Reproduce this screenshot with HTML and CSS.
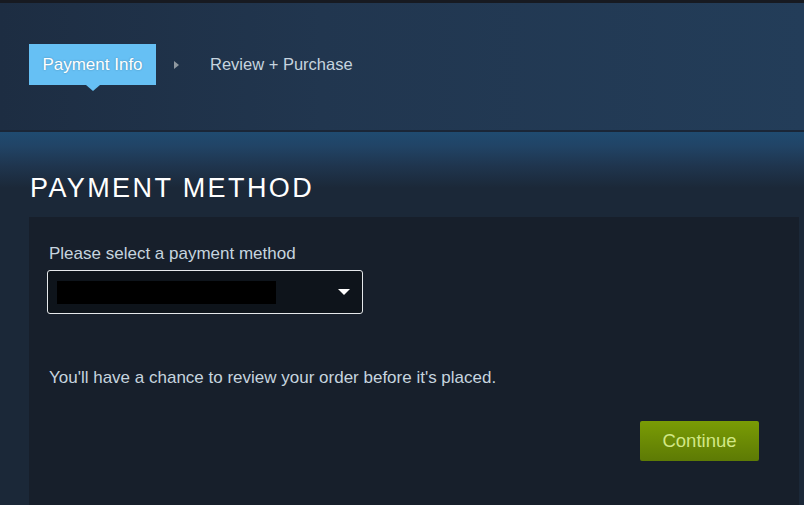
FILE: index.html
```html
<!DOCTYPE html>
<html>
<head>
<meta charset="utf-8">
<link rel="stylesheet" href="styles.css">
</head>
<body>
<div class="topbar"></div>
<header class="header">
  <nav class="steps">
    <div class="step active">Payment Info</div>
    <div class="sep"></div>
    <div class="step">Review + Purchase</div>
  </nav>
</header>
<main class="main">
  <h1 class="title">PAYMENT METHOD</h1>
  <section class="panel">
    <label class="label">Please select a payment method</label>
    <div class="select">
      <div class="redact"></div>
      <div class="caret"></div>
    </div>
    <p class="note">You'll have a chance to review your order before it's placed.</p>
    <div class="actions">
      <button class="btn">Continue</button>
    </div>
  </section>
</main>
</body>
</html>
```

FILE: styles.css
```css
html, body {
  margin: 0;
  padding: 0;
}
body {
  width: 804px;
  height: 505px;
  overflow: hidden;
  background: #1b2838;
  font-family: "Liberation Sans", Arial, sans-serif;
}
.topbar {
  height: 3px;
  background: #171a21;
}
.header {
  height: 129px;
  box-sizing: border-box;
  background: linear-gradient(90deg, #1d2d42 0%, #21364f 40%, #233d59 100%);
  border-bottom: 2px solid #1a2637;
  padding: 41px 0 0 29px;
}
.steps {
  display: flex;
  align-items: center;
}
.step {
  font-size: 16.5px;
  color: #c6d4df;
  height: 41px;
  display: flex;
  align-items: center;
  white-space: nowrap;
}
.step.active {
  position: relative;
  background: #66c0f4;
  color: #ffffff;
  width: 127px;
  box-sizing: border-box;
  justify-content: center;
  font-size: 17px;
  text-shadow: 0 0 2px rgba(0,0,0,0.3);
}
.step.active::after {
  content: "";
  position: absolute;
  left: 57px;
  bottom: -6px;
  border-left: 7px solid transparent;
  border-right: 7px solid transparent;
  border-top: 6px solid #66c0f4;
}
.sep {
  width: 0;
  height: 0;
  margin: 0 31px 0 18px;
  border-top: 4px solid transparent;
  border-bottom: 4px solid transparent;
  border-left: 5px solid #8f98a0;
}
.main {
  background: linear-gradient(180deg, #1f4b70 0px, #214466 14px, #1f354e 34px, #1b2838 56px, #1b2838 100%);
  height: 373px;
  overflow: hidden;
}
.title {
  margin: 0;
  padding: 41px 0 0 30px;
  height: 44px;
  font-weight: normal;
  font-size: 27px;
  letter-spacing: 2.4px;
  color: #ffffff;
  line-height: 30px;
}
.panel {
  margin-left: 29px;
  width: 770px;
  height: 300px;
  background: #171f2b;
  padding: 28px 40px 0 20px;
  box-sizing: border-box;
}
.label {
  display: block;
  font-size: 17px;
  color: #c6d4df;
  line-height: 18px;
  margin-bottom: 7px;
}
.select {
  margin-left: -2px;
  width: 316px;
  height: 44px;
  box-sizing: border-box;
  border: 1px solid #e5e8eb;
  border-radius: 3px;
  background: #0e141b;
  display: flex;
  align-items: center;
  padding-left: 9px;
}
.redact {
  width: 219px;
  height: 23px;
  background: #000;
}
.caret {
  margin-left: 62px;
  width: 0;
  height: 0;
  border-left: 6px solid transparent;
  border-right: 6px solid transparent;
  border-top: 6px solid #ffffff;
}
.note {
  margin: 55px 0 0 0;
  font-size: 17px;
  color: #c6d4df;
  line-height: 18px;
}
.actions {
  display: flex;
  justify-content: flex-end;
  margin-top: 34px;
}
.btn {
  width: 119px;
  height: 40px;
  border: none;
  border-radius: 2px;
  background: linear-gradient(180deg, #7a9c05 0%, #5d7a05 100%);
  color: #d2e885;
  font-family: "Liberation Sans", Arial, sans-serif;
  font-size: 18.5px;
  padding: 0;
}
```
